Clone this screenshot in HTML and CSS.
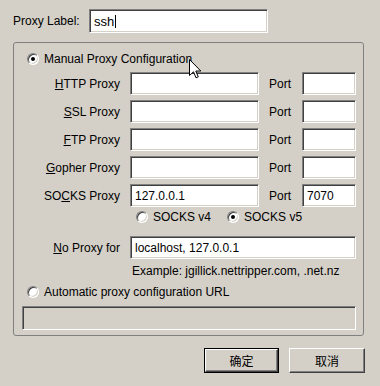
FILE: index.html
```html
<!DOCTYPE html>
<html>
<head>
    <title>Proxy Settings</title>
    <link rel="stylesheet" href="styles.css">
</head>
<body>
    <div class="dialog">
        <div class="label-row">
            <span class="label-text">Proxy Label:</span>
            <div class="field label-field">ssh<span class="caret"></span></div>
        </div>

        <div class="group">
            <div class="radio-row">
                <span class="radio checked"></span>
                <span>Manual Proxy Configuration</span>
            </div>

            <div class="proxy-row">
                <span class="row-label"><u>H</u>TTP Proxy</span>
                <div class="field host"></div>
                <span class="port-label">Port</span>
                <div class="field port"></div>
            </div>
            <div class="proxy-row">
                <span class="row-label"><u>S</u>SL Proxy</span>
                <div class="field host"></div>
                <span class="port-label">Port</span>
                <div class="field port"></div>
            </div>
            <div class="proxy-row">
                <span class="row-label"><u>F</u>TP Proxy</span>
                <div class="field host"></div>
                <span class="port-label">Port</span>
                <div class="field port"></div>
            </div>
            <div class="proxy-row">
                <span class="row-label"><u>G</u>opher Proxy</span>
                <div class="field host"></div>
                <span class="port-label">Port</span>
                <div class="field port"></div>
            </div>
            <div class="proxy-row">
                <span class="row-label">SO<u>C</u>KS Proxy</span>
                <div class="field host">127.0.0.1</div>
                <span class="port-label">Port</span>
                <div class="field port">7070</div>
            </div>

            <div class="socks-row">
                <span class="radio"></span>
                <span class="socks-text">SOCKS v4</span>
                <span class="radio checked"></span>
                <span>SOCKS v5</span>
            </div>

            <div class="proxy-row noproxy-row">
                <span class="row-label"><u>N</u>o Proxy for</span>
                <div class="field wide">localhost, 127.0.0.1</div>
            </div>
            <div class="example">Example: jgillick.nettripper.com, .net.nz</div>

            <div class="radio-row auto-row">
                <span class="radio"></span>
                <span>Automatic proxy configuration URL</span>
            </div>
            <div class="field url disabled"></div>
        </div>

        <div class="buttons">
            <div class="button default"><span>确定</span></div>
            <div class="button">取消</div>
        </div>

        <svg class="cursor" width="13" height="21" viewBox="0 0 13 21">
            <path d="M0.5 0.5 L0.5 16.5 L4.5 12.8 L7 18.8 L9.3 17.8 L6.8 12 L11.8 12 Z" fill="#fff" stroke="#000" stroke-width="1"/>
        </svg>
    </div>
</body>
</html>
```

FILE: styles.css
```css
body {
    margin: 0;
    background-color: #d4d0c8;
    font-family: "Liberation Sans", Arial, "Noto Sans CJK SC", sans-serif;
    font-size: 12px;
    color: #000;
}
.dialog {
    position: relative;
    width: 380px;
    height: 386px;
    padding: 9px 0 0 13px;
    box-sizing: border-box;
}
.label-row {
    display: flex;
    align-items: center;
    height: 24px;
}
.label-text {
    width: 76px;
}
.field {
    background-color: #fff;
    border: 1px solid;
    border-color: #808080 #fff #fff #808080;
    box-shadow: inset 1px 1px #404040, inset -1px -1px #d4d0c8;
    box-sizing: border-box;
    height: 23px;
    padding: 0 4px;
    display: flex;
    align-items: center;
    white-space: nowrap;
}
.label-field {
    width: 179px;
    height: 24px;
    font-size: 13px;
}
.caret {
    display: inline-block;
    width: 1px;
    height: 13px;
    background-color: #000;
    margin-left: 1px;
}
.group {
    margin-top: 9px;
    width: 351px;
    height: 294px;
    border: 1px solid #808080;
    border-radius: 3px;
    box-sizing: border-box;
    padding: 9px 0 0 8px;
}
.radio-row {
    display: flex;
    align-items: center;
    height: 14px;
    padding-left: 5px;
    gap: 5px;
}
.radio {
    width: 12px;
    height: 12px;
    border-radius: 50%;
    box-sizing: border-box;
    background-color: #fff;
    border: 1px solid;
    border-color: #808080 #fff #fff #808080;
    box-shadow: inset 1px 1px #404040, inset -1px -1px #d4d0c8;
    position: relative;
    flex-shrink: 0;
}
.radio.checked::after {
    content: "";
    position: absolute;
    left: 3px;
    top: 3px;
    width: 4px;
    height: 4px;
    border-radius: 50%;
    background-color: #000;
}
.proxy-row {
    display: flex;
    align-items: center;
    margin-top: 5px;
}
.radio-row + .proxy-row {
    margin-top: 6px;
}
.row-label {
    width: 98px;
    text-align: right;
    margin-right: 10px;
}
.field.host {
    width: 129px;
}
.port-label {
    width: 33px;
    margin-left: 10px;
}
.field.port {
    width: 54px;
}
.socks-row {
    display: flex;
    align-items: center;
    height: 14px;
    margin-top: 3px;
    padding-left: 114px;
    gap: 5px;
}
.socks-text {
    margin-right: 11px;
}
.noproxy-row {
    margin-top: 12px;
}
.field.wide {
    width: 226px;
}
.example {
    margin-top: 5px;
    padding-left: 110px;
    height: 14px;
    line-height: 14px;
}
.auto-row {
    margin-top: 7px;
}
.field.url {
    margin-top: 7px;
    width: 334px;
    height: 24px;
}
.field.disabled {
    background-color: #d4d0c8;
}
.buttons {
    display: flex;
    justify-content: flex-end;
    gap: 10px;
    margin-top: 12px;
    padding-right: 15px;
}
.button {
    width: 76px;
    height: 25px;
    box-sizing: border-box;
    display: flex;
    align-items: center;
    justify-content: center;
    font-family: "Noto Sans CJK SC", sans-serif;
    font-size: 12px;
    border: 1px solid;
    border-color: #fff #404040 #404040 #fff;
    box-shadow: inset -1px -1px #808080;
}
.button.default {
    width: 75px;
    border: 1px solid #000;
    box-shadow: none;
}
.button.default span {
    flex: 1;
    align-self: stretch;
    display: flex;
    align-items: center;
    justify-content: center;
    border: 1px solid;
    border-color: #fff #404040 #404040 #fff;
    box-shadow: inset -1px -1px #808080;
}
.cursor {
    position: absolute;
    left: 189px;
    top: 59px;
}
```
